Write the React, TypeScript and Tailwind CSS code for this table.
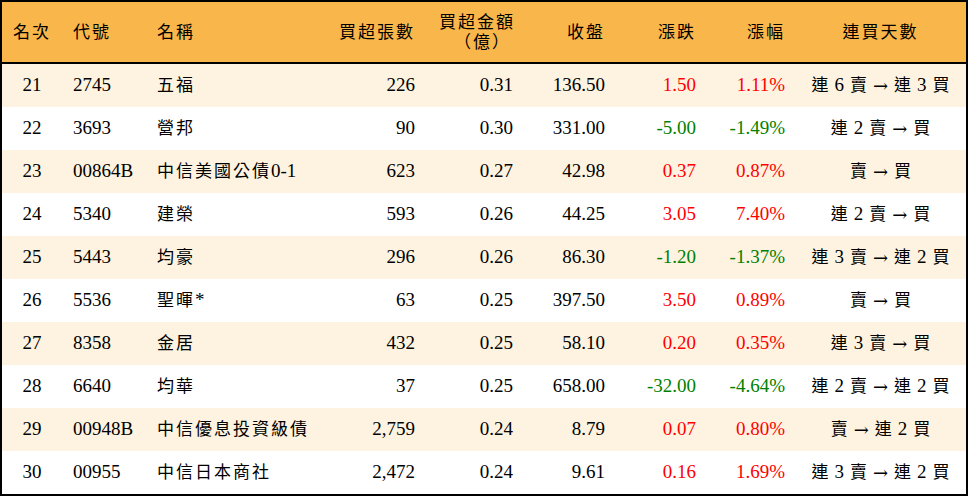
import React from "react";

type Row = {
  rank: number;
  code: string;
  name: string;
  qty: string;
  amount: string;
  close: string;
  change: string;
  pct: string;
  days: string;
};

const rows: Row[] = [
  { rank: 21, code: "2745", name: "五福", qty: "226", amount: "0.31", close: "136.50", change: "1.50", pct: "1.11%", days: "連6賣→連3買" },
  { rank: 22, code: "3693", name: "營邦", qty: "90", amount: "0.30", close: "331.00", change: "-5.00", pct: "-1.49%", days: "連2賣→買" },
  { rank: 23, code: "00864B", name: "中信美國公債0-1", qty: "623", amount: "0.27", close: "42.98", change: "0.37", pct: "0.87%", days: "賣→買" },
  { rank: 24, code: "5340", name: "建榮", qty: "593", amount: "0.26", close: "44.25", change: "3.05", pct: "7.40%", days: "連2賣→買" },
  { rank: 25, code: "5443", name: "均豪", qty: "296", amount: "0.26", close: "86.30", change: "-1.20", pct: "-1.37%", days: "連3賣→連2買" },
  { rank: 26, code: "5536", name: "聖暉*", qty: "63", amount: "0.25", close: "397.50", change: "3.50", pct: "0.89%", days: "賣→買" },
  { rank: 27, code: "8358", name: "金居", qty: "432", amount: "0.25", close: "58.10", change: "0.20", pct: "0.35%", days: "連3賣→買" },
  { rank: 28, code: "6640", name: "均華", qty: "37", amount: "0.25", close: "658.00", change: "-32.00", pct: "-4.64%", days: "連2賣→連2買" },
  { rank: 29, code: "00948B", name: "中信優息投資級債", qty: "2,759", amount: "0.24", close: "8.79", change: "0.07", pct: "0.80%", days: "賣→連2買" },
  { rank: 30, code: "00955", name: "中信日本商社", qty: "2,472", amount: "0.24", close: "9.61", change: "0.16", pct: "1.69%", days: "連3賣→連2買" },
];

const cols = "grid grid-cols-[60px_86px_152px_125px_98px_92px_91px_89px_1fr]";

// split text so CJK runs get the kai-like sizing and spacing
function Mixed({ text }: { text: string }) {
  const parts = text.match(/[\u3000-\u9fff\uff00-\uffef]+|[^\u3000-\u9fff\uff00-\uffef]+/g) ?? [];
  return (
    <>
      {parts.map((p, i) =>
        /[\u3000-\u9fff\uff00-\uffef]/.test(p) ? (
          <span key={i} className="text-[17px] tracking-[2px]">
            {p}
          </span>
        ) : (
          <span key={i}>{p}</span>
        )
      )}
    </>
  );
}

function Days({ text }: { text: string }) {
  return (
    <div className="flex items-center justify-center gap-[6px]">
      {[...text].map((c, i) =>
        /[0-9]/.test(c) ? (
          <span key={i}>{c}</span>
        ) : c === "→" ? (
          <span key={i} className="text-[18px] font-['DejaVu_Serif',serif]">
            {c}
          </span>
        ) : (
          <span key={i} className="text-[17px]">
            {c}
          </span>
        )
      )}
    </div>
  );
}

export default function App() {
  return (
    <div
      className="w-[968px] h-[496px] border-2 border-black bg-white text-[19px] text-black"
      style={{ fontFamily: "'Liberation Serif', 'Noto Sans CJK TC', serif" }}
    >
      <div className={`${cols} h-[62px] items-center border-b-2 border-black bg-[#f9b64b]`}>
        <div className="text-center"><Mixed text="名次" /></div>
        <div className="pl-[11px]"><Mixed text="代號" /></div>
        <div className="pl-[9px]"><Mixed text="名稱" /></div>
        <div className="pr-[10px] text-right"><Mixed text="買超張數" /></div>
        <div className="pr-[8px] text-right leading-[19px]">
          <div><Mixed text="買超金額" /></div>
          <div className="pr-[4px]"><Mixed text="（億）" /></div>
        </div>
        <div className="pr-[10px] text-right"><Mixed text="收盤" /></div>
        <div className="pr-[10px] text-right"><Mixed text="漲跌" /></div>
        <div className="pr-[10px] text-right"><Mixed text="漲幅" /></div>
        <div className="text-center"><Mixed text="連買天數" /></div>
      </div>
      {rows.map((r, i) => {
        const color = r.change.startsWith("-") ? "text-[#008000]" : "text-[#ff0000]";
        return (
          <div
            key={r.rank}
            className={`${cols} h-[43px] items-center ${i % 2 === 0 ? "bg-[#fef3e0]" : "bg-white"}`}
          >
            <div className="text-center">{r.rank}</div>
            <div className="pl-[11px]">{r.code}</div>
            <div className="pl-[9px] whitespace-nowrap"><Mixed text={r.name} /></div>
            <div className="pr-[10px] text-right">{r.qty}</div>
            <div className="pr-[10px] text-right">{r.amount}</div>
            <div className="pr-[10px] text-right">{r.close}</div>
            <div className={`pr-[10px] text-right ${color}`}>{r.change}</div>
            <div className={`pr-[10px] text-right ${color}`}>{r.pct}</div>
            <Days text={r.days} />
          </div>
        );
      })}
    </div>
  );
}
